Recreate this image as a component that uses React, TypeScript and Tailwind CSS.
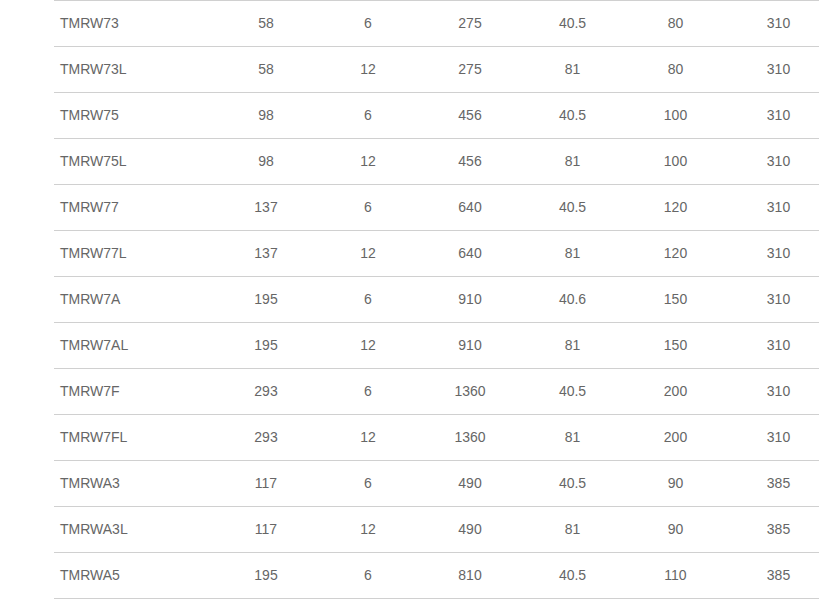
import React from 'react';

type Row = [string, string, string, string, string, string, string];

const ROWS: Row[] = [
  ['TMRW73', '58', '6', '275', '40.5', '80', '310'],
  ['TMRW73L', '58', '12', '275', '81', '80', '310'],
  ['TMRW75', '98', '6', '456', '40.5', '100', '310'],
  ['TMRW75L', '98', '12', '456', '81', '100', '310'],
  ['TMRW77', '137', '6', '640', '40.5', '120', '310'],
  ['TMRW77L', '137', '12', '640', '81', '120', '310'],
  ['TMRW7A', '195', '6', '910', '40.6', '150', '310'],
  ['TMRW7AL', '195', '12', '910', '81', '150', '310'],
  ['TMRW7F', '293', '6', '1360', '40.5', '200', '310'],
  ['TMRW7FL', '293', '12', '1360', '81', '200', '310'],
  ['TMRWA3', '117', '6', '490', '40.5', '90', '385'],
  ['TMRWA3L', '117', '12', '490', '81', '90', '385'],
  ['TMRWA5', '195', '6', '810', '40.5', '110', '385'],
];

export default function App() {
  return (
    <div className="w-[819px] h-[600px] overflow-hidden bg-white pl-[54px] font-['Liberation_Sans',Arial,sans-serif] text-[14px] text-[#666]">
      {/* spec table */}
      <div className="w-[776px] border-t border-[#d0d0d0]">
        {ROWS.map(row => (
          <div
            key={row[0]}
            className="grid grid-cols-[161px_102px_102px_102px_103px_103px_103px] h-[45px] box-content border-b border-[#d0d0d0] items-center"
          >
            <span className="pl-[6px]">{row[0]}</span>
            {row.slice(1).map((cell, i) => (
              <span key={i} className="text-center">{cell}</span>
            ))}
          </div>
        ))}
      </div>
    </div>
  );
}
